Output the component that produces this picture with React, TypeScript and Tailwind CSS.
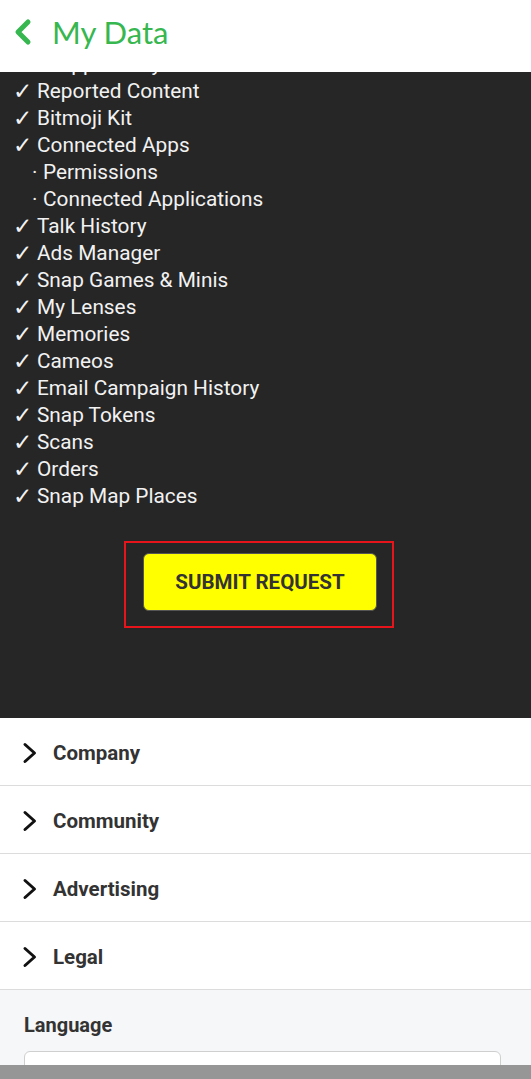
import React from "react";

type Item = { text: string; sub?: boolean };

const items: Item[] = [
  { text: "In-app Surveys" },
  { text: "Reported Content" },
  { text: "Bitmoji Kit" },
  { text: "Connected Apps" },
  { text: "Permissions", sub: true },
  { text: "Connected Applications", sub: true },
  { text: "Talk History" },
  { text: "Ads Manager" },
  { text: "Snap Games & Minis" },
  { text: "My Lenses" },
  { text: "Memories" },
  { text: "Cameos" },
  { text: "Email Campaign History" },
  { text: "Snap Tokens" },
  { text: "Scans" },
  { text: "Orders" },
  { text: "Snap Map Places" },
];

const sections = ["Company", "Community", "Advertising", "Legal"];

function Chevron() {
  return (
    <svg width="16" height="24" viewBox="0 0 16 24" className="shrink-0">
      <path d="M3 3.5 L12.5 12 L3 20.5" fill="none" stroke="#111" strokeWidth="3" strokeLinecap="round" strokeLinejoin="round" />
    </svg>
  );
}

export default function App() {
  return (
    <div
      className="w-[531px] h-[1079px] overflow-hidden flex flex-col bg-white"
      style={{ fontFamily: "Roboto, 'Liberation Sans', sans-serif" }}
    >
      <header className="h-[72px] shrink-0 bg-white flex items-center pl-[12px] gap-[18px]">
        <svg width="22" height="30" viewBox="0 0 22 30" className="mt-[-8px]">
          <path d="M16 5 L6 15 L16 25" fill="none" stroke="#37b74f" strokeWidth="5" strokeLinecap="round" strokeLinejoin="round" />
        </svg>
        <span
          className="text-[31px] leading-none text-[#37b74f] mt-[-7px]"
          style={{ fontFamily: "Lato, 'Open Sans', sans-serif" }}
        >
          My Data
        </span>
      </header>

      <section className="bg-[#262626] overflow-hidden shrink-0 h-[646px] flex flex-col">
        <ul className="mt-[-21px] pl-[13px] text-[20.8px] leading-[27px] text-[#f2f2f2]">
          {items.map((it) =>
            it.sub ? (
              <li key={it.text} className="pl-[19px] flex">
                <span className="w-[11px]">·</span>
                <span>{it.text}</span>
              </li>
            ) : (
              <li key={it.text} className="flex items-center">
                <span
                  className="w-[24px] text-[23px] leading-[27px]"
                  style={{ fontFamily: "'DejaVu Sans', sans-serif" }}
                >
                  ✓
                </span>
                <span>{it.text}</span>
              </li>
            )
          )}
        </ul>
        <div className="flex mt-[31px] ml-[124px]">
          <div className="border-2 border-[#e8141c] w-[270px] h-[87px] pt-[10px] pl-[17px]">
            <button className="w-[234px] h-[58px] bg-[#ffff00] rounded-[6px] border border-[#555] text-[20.5px] font-bold text-[#333]">
              SUBMIT REQUEST
            </button>
          </div>
        </div>
      </section>

      {sections.map((s) => (
        <div
          key={s}
          className="h-[68px] shrink-0 flex items-center gap-[15px] pl-[22px] pt-[3px] border-b border-[#dcdcdc] bg-white"
        >
          <Chevron />
          <span className="text-[20.5px] font-bold text-[#333]">{s}</span>
        </div>
      ))}

      <div className="flex-1 bg-[#f6f7f9] pl-[24px] pr-[30px] pt-[22px] overflow-hidden">
        <div className="text-[20px] font-bold text-[#333] leading-[26px]">Language</div>
        <div className="mt-[13px] h-[40px] bg-white border border-[#cfcfcf] rounded-[6px]" />
      </div>

      <div className="h-[14px] shrink-0 bg-[#969696]" />
    </div>
  );
}
